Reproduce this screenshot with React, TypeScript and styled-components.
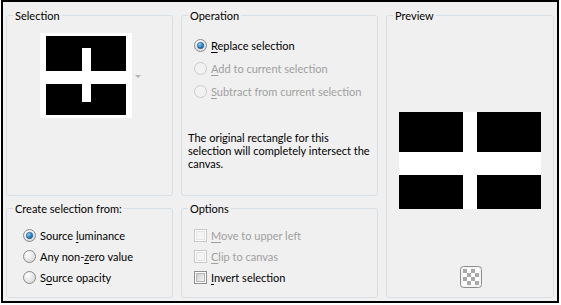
import React from "react";
import styled, { createGlobalStyle } from "styled-components";

const GlobalStyle = createGlobalStyle`
  html, body {
    margin: 0;
    padding: 0;
    background: #fff;
  }
  body {
    font-family: Lato, "Liberation Sans", sans-serif;
    font-size: 11px;
    color: #000;
  }
`;

type radioProps = { checked?: boolean; disabled?: boolean };

const RadioIcon: React.FC<radioProps> = ({ checked, disabled }) => (
  <svg width="13" height="13" viewBox="0 0 13 13">
    <defs>
      <radialGradient id="radioFill" cx="0.35" cy="0.3" r="0.8">
        <stop offset="0" stopColor="#ffffff" />
        <stop offset="1" stopColor="#d6d6d6" />
      </radialGradient>
      <radialGradient id="radioDot" cx="0.35" cy="0.3" r="0.8">
        <stop offset="0" stopColor="#8fd0f5" />
        <stop offset="0.6" stopColor="#2a84c4" />
        <stop offset="1" stopColor="#1b4f7a" />
      </radialGradient>
    </defs>
    <circle
      cx="6.5"
      cy="6.5"
      r="6"
      fill={disabled ? "#f2f2f2" : "url(#radioFill)"}
      stroke={disabled ? "#c9c9c9" : "#8a8a8a"}
    />
    {checked && <circle cx="6.5" cy="6.5" r="3.2" fill="url(#radioDot)" stroke="#24567f" strokeWidth="0.6" />}
  </svg>
);

const CheckIcon: React.FC<{ disabled?: boolean }> = ({ disabled }) => (
  <svg width="13" height="13" viewBox="0 0 13 13">
    <defs>
      <linearGradient id="checkFill" x1="0" y1="0" x2="1" y2="1">
        <stop offset="0" stopColor="#cfcfcf" />
        <stop offset="1" stopColor="#f6f6f6" />
      </linearGradient>
    </defs>
    <rect x="0.5" y="0.5" width="12" height="12" fill="#fff" stroke={disabled ? "#c9c9c9" : "#8e8f8f"} />
    <rect x="2.5" y="2.5" width="8" height="8" fill={disabled ? "#f4f4f4" : "url(#checkFill)"} stroke={disabled ? "#e4e4e4" : "#b5b5b5"} />
  </svg>
);

const SelectionThumb = () => (
  <svg width="92" height="85" viewBox="0 0 92 85">
    <rect width="92" height="85" fill="#fff" />
    <rect x="6" y="3" width="80" height="79" fill="#000" />
    <rect x="6" y="38" width="80" height="13" fill="#fff" />
    <rect x="42" y="15" width="9" height="54" fill="#fff" />
  </svg>
);

const PreviewPicture = () => (
  <svg width="142" height="97" viewBox="0 0 142 97">
    <rect width="142" height="97" fill="#000" />
    <rect x="0" y="40" width="142" height="23" fill="#fff" />
    <rect x="64" y="0" width="14" height="97" fill="#fff" />
  </svg>
);

const CheckerIcon = () => (
  <svg width="22" height="22" viewBox="0 0 22 22">
    <rect x="0.5" y="0.5" width="21" height="21" rx="3" fill="#f4f4f4" stroke="#8d8d8d" />
    {[0, 1, 2, 3].map((r) =>
      [0, 1, 2, 3].map((c) => (
        <rect
          key={`${r}-${c}`}
          x={3 + c * 4}
          y={3 + r * 4}
          width="4"
          height="4"
          fill={(r + c) % 2 === 0 ? "#a9a9a9" : "#ffffff"}
        />
      ))
    )}
  </svg>
);

const App: React.FC = () => {
  return (
    <>
      <GlobalStyle />
      <Frame>
        <Group $area="sel">
          <Legend>Selection</Legend>
          <ThumbRow>
            <SelectionThumb />
            <DropArrow />
          </ThumbRow>
        </Group>

        <Group $area="op">
          <Legend>Operation</Legend>
          <OptionList $top={15} $gap={23} $left={12}>
            <Option>
              <RadioIcon checked />
              <Label>
                <u>R</u>eplace selection
              </Label>
            </Option>
            <Option>
              <RadioIcon disabled />
              <Label $disabled>
                <u>A</u>dd to current selection
              </Label>
            </Option>
            <Option>
              <RadioIcon disabled />
              <Label $disabled>
                <u>S</u>ubtract from current selection
              </Label>
            </Option>
          </OptionList>
          <Note>
            The original rectangle for this
            <br />
            selection will completely intersect the
            <br />
            canvas.
          </Note>
        </Group>

        <Group $area="prev">
          <Legend>Preview</Legend>
          <PreviewBody>
            <PreviewPicture />
          </PreviewBody>
          <CheckerRow>
            <CheckerIcon />
          </CheckerRow>
        </Group>

        <Group $area="src">
          <Legend>Create selection from:</Legend>
          <OptionList $top={12} $gap={21} $left={16}>
            <Option>
              <RadioIcon checked />
              <Label>
                Source <u>l</u>uminance
              </Label>
            </Option>
            <Option>
              <RadioIcon />
              <Label>
                Any non-<u>z</u>ero value
              </Label>
            </Option>
            <Option>
              <RadioIcon />
              <Label>
                S<u>o</u>urce opacity
              </Label>
            </Option>
          </OptionList>
        </Group>

        <Group $area="opt">
          <Legend>Options</Legend>
          <OptionList $top={12} $gap={21} $left={12}>
            <Option>
              <CheckIcon disabled />
              <Label $disabled>
                <u>M</u>ove to upper left
              </Label>
            </Option>
            <Option>
              <CheckIcon disabled />
              <Label $disabled>
                <u>C</u>lip to canvas
              </Label>
            </Option>
            <Option>
              <CheckIcon />
              <Label>
                <u>I</u>nvert selection
              </Label>
            </Option>
          </OptionList>
        </Group>
      </Frame>
    </>
  );
};
export default App;

const Frame = styled.div`
  box-sizing: border-box;
  margin-left: 1px;
  width: 558px;
  height: 303px;
  border: 2px solid #000;
  background: #f0f0f0;
  padding: 6px 3px 2px 3px;
  display: grid;
  grid-template-columns: 167px 197px 168px;
  grid-template-rows: 188px 97px;
  grid-template-areas:
    "sel op prev"
    "src opt prev";
  column-gap: 8px;
  row-gap: 5px;
`;

const Group = styled.fieldset<{ $area: string }>`
  grid-area: ${(p) => p.$area};
  box-sizing: border-box;
  margin: 0;
  padding: 0;
  min-width: 0;
  border: 1px solid #d5dfe5;
  border-radius: 3px;
  display: flex;
  flex-direction: column;
`;

const Legend = styled.legend`
  margin-left: 6px;
  padding: 0 2px;
  font-size: 11px;
  line-height: 15px;
  color: #000;
`;

const ThumbRow = styled.div`
  display: flex;
  align-items: center;
  justify-content: center;
  gap: 3px;
  margin-top: 10px;
  padding-left: 2px;
`;

const DropArrow = styled.span`
  width: 0;
  height: 0;
  border-left: 3px solid transparent;
  border-right: 3px solid transparent;
  border-top: 3px solid #b4b4b4;
  margin-top: 2px;
`;

const OptionList = styled.div<{ $top: number; $gap: number; $left: number }>`
  display: flex;
  flex-direction: column;
  margin-top: ${(p) => p.$top}px;
  padding-left: ${(p) => p.$left}px;
  row-gap: ${(p) => p.$gap - 15}px;
`;

const Option = styled.div`
  display: flex;
  align-items: center;
  gap: 4px;
  height: 15px;
`;

const Label = styled.span<{ $disabled?: boolean }>`
  line-height: 15px;
  color: ${(p) => (p.$disabled ? "#a0a0a0" : "#000")};
  u {
    text-underline-offset: 2px;
  }
`;

const Note = styled.p`
  margin: 32px 0 0 6px;
  white-space: nowrap;
  line-height: 13px;
  color: #000;
`;

const PreviewBody = styled.div`
  flex: 1;
  display: flex;
  align-items: center;
  justify-content: center;
  padding-top: 31px;
`;

const CheckerRow = styled.div`
  display: flex;
  justify-content: center;
  padding-left: 1px;
  margin-bottom: 9px;
`;
